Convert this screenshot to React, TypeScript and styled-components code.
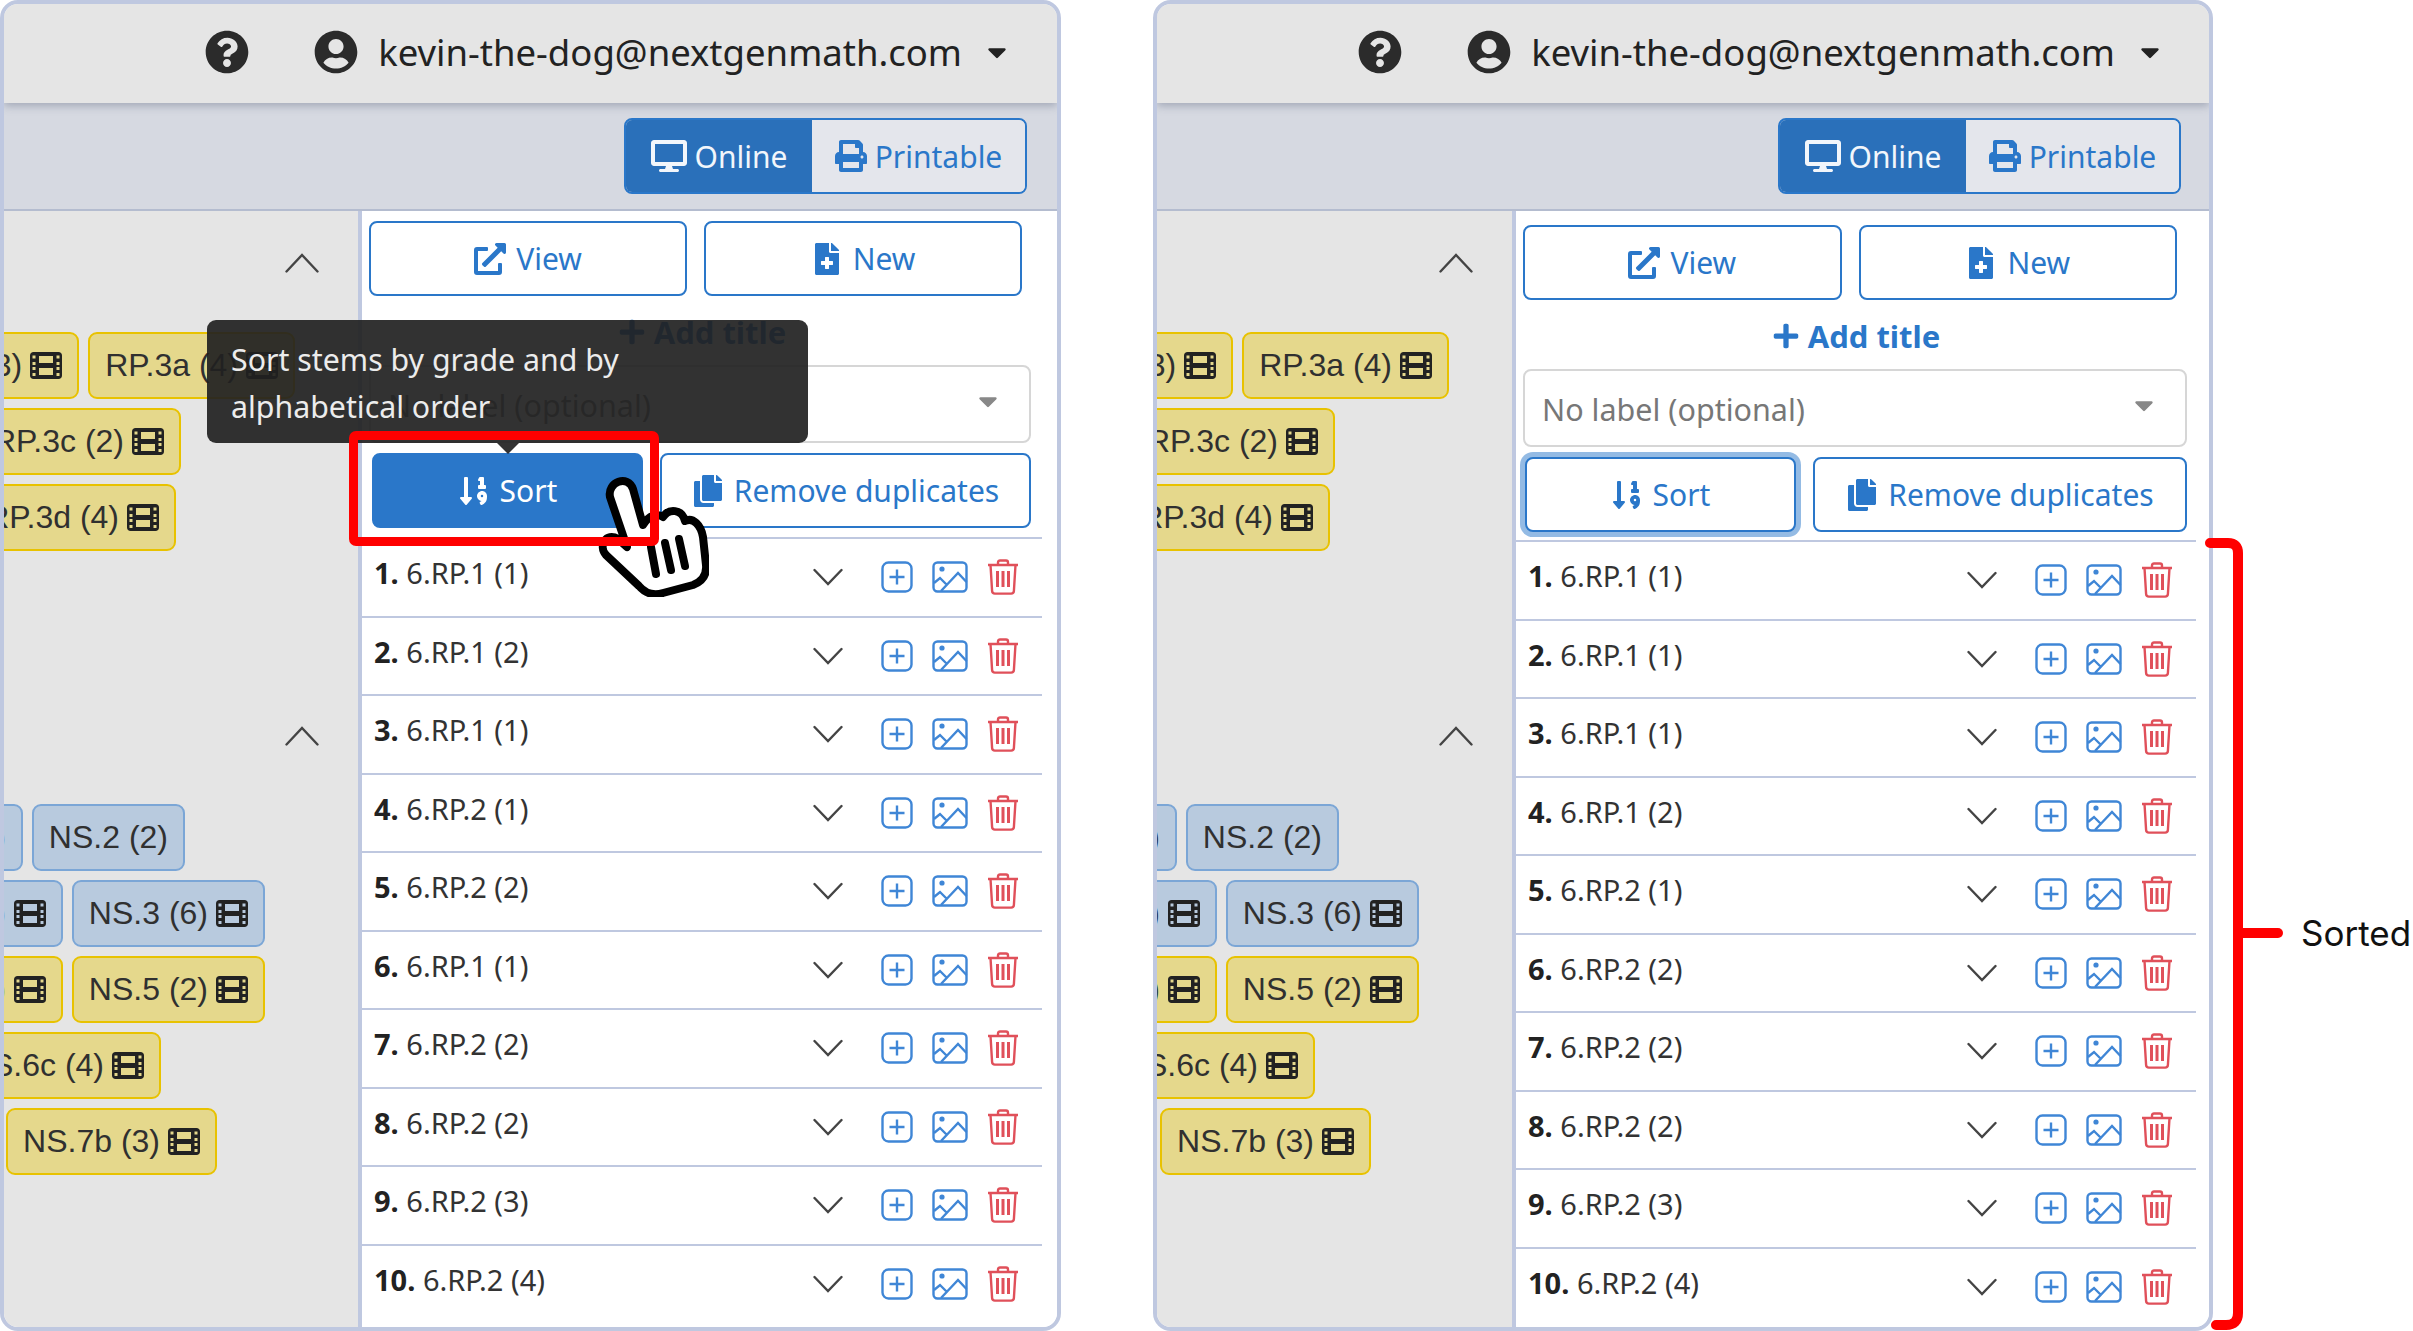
import React from 'react';
import styled, { createGlobalStyle } from 'styled-components';
import {
  FaCaretDown,
  FaCopy,
  FaDesktop,
  FaExternalLinkAlt,
  FaFileMedical,
  FaPlus,
  FaPrint,
  FaQuestionCircle,
  FaSortNumericDown,
  FaUserCircle,
} from 'react-icons/fa';

const Blue = '#2a77c9';
const Line = '#bfc8e0';

const GlobalStyle = createGlobalStyle`
  html, body {
    margin: 0;
    padding: 0;
    width: 2413px;
    height: 1331px;
    overflow: hidden;
    background: #fff;
    font-family: "Noto Sans", "Liberation Sans", sans-serif;
  }
`;

const Page = styled.div`
  position: relative;
  display: flex;
  gap: 92px;
  width: 2413px;
  height: 1331px;
  overflow: hidden;
`;

const Window = styled.div`
  position: relative;
  display: flex;
  flex-direction: column;
  flex-shrink: 0;
  box-sizing: border-box;
  width: ${(p) => (p.$sorted ? 1060 : 1061)}px;
  height: 1331px;
  border: 4px solid ${Line};
  border-radius: 18px;
  overflow: hidden;
`;

const Header = styled.header`
  position: relative;
  z-index: 1;
  display: flex;
  align-items: center;
  justify-content: flex-end;
  flex-shrink: 0;
  box-sizing: border-box;
  height: 99px;
  padding: 0 ${(p) => (p.$sorted ? 44 : 45)}px 3px 0;
  background: #e5e5e5;
  box-shadow: 0 3px 8px rgba(70, 80, 110, 0.35);
  color: #222;
`;

const HelpIcon = styled(FaQuestionCircle)`
  width: 44px;
  height: 44px;
  margin-right: 65px;
  color: #2b2b2b;
`;

const UserIcon = styled(FaUserCircle)`
  width: 44px;
  height: 44px;
  margin-right: 20px;
  color: #2b2b2b;
`;

const Email = styled.span`
  font-size: 36.5px;
  line-height: 44px;
  color: #222;
`;

const HeaderCaret = styled(FaCaretDown)`
  width: 30px;
  height: 30px;
  margin-left: 20px;
  color: #222;
`;

const Toolbar = styled.div`
  display: flex;
  align-items: center;
  justify-content: flex-end;
  flex-shrink: 0;
  box-sizing: border-box;
  height: 108px;
  padding: 0 ${(p) => (p.$sorted ? 28 : 30)}px 0 0;
  background: #d6d9e1;
  border-bottom: 2px solid #b4bccf;
`;

const ToggleGroup = styled.div`
  display: flex;
  height: 76px;
  border: 2px solid ${Blue};
  border-radius: 8px;
  box-sizing: border-box;
  overflow: hidden;
`;

const ToggleButton = styled.div`
  display: flex;
  align-items: center;
  justify-content: center;
  gap: 8px;
  box-sizing: border-box;
  width: ${(p) => p.$width}px;
  font-size: 30px;
  color: ${(p) => (p.$active ? '#f2f6fb' : Blue)};
  background: ${(p) => (p.$active ? '#2a70ba' : '#e4e6ec')};

  svg {
    width: ${(p) => (p.$active ? 36 : 32)}px;
    height: ${(p) => (p.$active ? 36 : 32)}px;
  }
`;

const Body = styled.div`
  display: flex;
  flex: 1;
  min-height: 0;
`;

const Sidebar = styled.aside`
  flex-shrink: 0;
  box-sizing: border-box;
  width: ${(p) => (p.$sorted ? 355 : 354)}px;
  padding-left: ${(p) => (p.$sorted ? 1 : 0)}px;
  background: #e5e5e5;
  overflow: hidden;
`;

const GroupHead = styled.div`
  display: flex;
  justify-content: flex-end;
  box-sizing: border-box;
  height: ${(p) => p.$height}px;
  padding-top: ${(p) => p.$top}px;
  padding-right: 39px;
  color: #444;
`;

const ChipRow = styled.div`
  display: flex;
  justify-content: flex-end;
  gap: 9px;
  width: ${(p) => p.$end - 4}px;
  height: 67px;
  margin-bottom: 9px;
`;

const Chip = styled.div`
  display: flex;
  align-items: center;
  flex-shrink: 0;
  gap: 8px;
  box-sizing: border-box;
  height: 100%;
  padding: 0 15px;
  border: 2px solid ${(p) => (p.$tone === 'blue' ? '#7ba6d6' : '#e8c200')};
  border-radius: 9px;
  background: ${(p) => (p.$tone === 'blue' ? '#b8cade' : '#e5d88c')};
  font-family: "Liberation Sans", Arial, sans-serif;
  font-size: 32px;
  color: #303030;
  white-space: nowrap;
`;

const Panel = styled.section`
  position: relative;
  flex: 1;
  min-width: 0;
  box-sizing: border-box;
  padding-top: ${(p) => (p.$sorted ? 14 : 10)}px;
  border-left: 4px solid ${Line};
  background: #fff;
`;

const ButtonRow = styled.div`
  display: flex;
  gap: 17px;
  box-sizing: border-box;
  width: ${(p) => p.$width}px;
  height: 75px;
  margin-left: 7px;
`;

const OutlineButton = styled.div`
  display: flex;
  align-items: center;
  justify-content: center;
  gap: 10px;
  flex: ${(p) => (p.$width ? `0 0 ${p.$width}px` : '1')};
  box-sizing: border-box;
  margin-left: ${(p) => (p.$inset ? p.$inset : 0)}px;
  border: 2px solid ${Blue};
  border-radius: 8px;
  font-size: 30px;
  color: ${(p) => (p.$solid ? '#fff' : Blue)};
  background: ${(p) => (p.$solid ? Blue : '#fff')};
  box-shadow: ${(p) => (p.$focus ? '0 0 0 5px rgba(42, 119, 201, 0.5)' : 'none')};

  svg {
    width: 32px;
    height: 32px;
  }
`;

const AddTitle = styled.div`
  display: flex;
  align-items: center;
  justify-content: center;
  gap: 8px;
  width: 680px;
  height: 69px;
  padding-top: 2px;
  box-sizing: border-box;
  font-size: 31px;
  font-weight: 700;
  color: ${Blue};

  svg {
    width: 28px;
    height: 28px;
  }
`;

const LabelSelect = styled.div`
  display: flex;
  align-items: center;
  justify-content: space-between;
  box-sizing: border-box;
  width: ${(p) => p.$width}px;
  height: 78px;
  margin: 0 0 10px 7px;
  padding: 2px 26px 0 17px;
  border: 2px solid #d6d6d6;
  border-radius: 8px;
  font-size: 30.5px;
  color: #777;

  svg {
    width: 30px;
    height: 30px;
    margin-bottom: 8px;
    color: #888;
  }
`;

const Stems = styled.div`
  width: 680px;
  margin-top: ${(p) => (p.$sorted ? 8 : 9)}px;
`;

const StemRow = styled.div`
  display: flex;
  align-items: center;
  box-sizing: border-box;
  height: 78.5px;
  padding: 0 23px 0 12px;
  border-top: 2.5px solid ${Line};
`;

const StemName = styled.div`
  flex: 1;
  margin-top: -9px;
  font-size: 29px;
  color: #333;

  b {
    font-weight: 700;
    color: #222;
  }
`;

const IconCell = styled.div`
  display: flex;
  justify-content: center;
  width: ${(p) => p.$width}px;
  margin-left: ${(p) => p.$gap}px;
`;

const Tooltip = styled.div`
  position: absolute;
  left: 203px;
  top: 316px;
  z-index: 3;
  box-sizing: border-box;
  width: 601px;
  height: 123px;
  padding: 16px 24px;
  border-radius: 9px;
  background: rgba(33, 33, 33, 0.92);
  color: #ececec;
  font-size: 30.3px;
  line-height: 47px;

  &::after {
    content: '';
    position: absolute;
    left: 290px;
    bottom: -11px;
    border-left: 11px solid transparent;
    border-right: 11px solid transparent;
    border-top: 11px solid rgba(33, 33, 33, 0.92);
  }
`;

const Highlight = styled.div`
  position: absolute;
  left: 345px;
  top: 427px;
  z-index: 5;
  box-sizing: border-box;
  width: 310px;
  height: 115px;
  border: 9px solid #f00;
  border-radius: 7px;
`;

const HandCursor = styled.svg`
  position: absolute;
  left: 593px;
  top: 471px;
  z-index: 4;
  width: 112px;
  height: 122px;
`;

const Bracket = styled.svg`
  position: absolute;
  left: 2200px;
  top: 535px;
  width: 90px;
  height: 796px;
`;

const SortedLabel = styled.span`
  position: absolute;
  left: 2301px;
  top: 912px;
  font-family: Inter, "Liberation Sans", sans-serif;
  font-size: 35px;
  line-height: 42px;
  color: #111;
`;

const FilmIcon = () => (
  <svg width="32" height="27" viewBox="0 0 32 27">
    <path
      fill="#222"
      fillRule="evenodd"
      d="M3.500 0h25C30.500 0 32 1.500 32 3.500v20c0 2-1.500 3.500-3.500 3.500h-25C1.500 27 0 25.500 0 23.500v-20C0 1.500 1.500 0 3.500 0zM2.500 3.500v3h3v-3zM2.500 10v3h3v-3zM2.500 15v3h3v-3zM2.500 21v3h3v-3zM26.500 3.500v3h3v-3zM26.500 10v3h3v-3zM26.500 15v3h3v-3zM26.500 21v3h3v-3zM9 4v7h14V4zM9 16v7h14v-7z"
    />
  </svg>
);

const ChevronDown = () => (
  <svg width="30" height="18" viewBox="0 0 30 18" fill="none" stroke="#444" strokeWidth="2.4" strokeLinecap="round">
    <polyline points="1.5,2 15,16 28.5,2" />
  </svg>
);

const ChevronUp = () => (
  <svg width="34" height="20" viewBox="0 0 34 20" fill="none" stroke="#444" strokeWidth="2.4" strokeLinecap="round">
    <polyline points="1.5,18.5 17,2 32.5,18.5" />
  </svg>
);

const PlusBox = () => (
  <svg width="32" height="32" viewBox="0 0 32 32" fill="none" stroke="#3f86d6" strokeWidth="2.4">
    <rect x="1.5" y="1.5" width="29" height="29" rx="6" />
    <path d="M16 8.5v15M8.5 16h15" />
  </svg>
);

const ImageBox = () => (
  <svg width="36" height="32" viewBox="0 0 36 32" fill="none" stroke="#3f86d6" strokeWidth="2.4">
    <rect x="1.5" y="1.5" width="33" height="29" rx="4" />
    <circle cx="10" cy="8" r="2.6" fill="#3f86d6" stroke="none" />
    <path d="M2 22l6-5 6 6M9 30L26 12l8.5 9" />
  </svg>
);

const TrashCan = () => (
  <svg width="32" height="36" viewBox="0 0 32 36" fill="none" stroke="#e0505a" strokeWidth="2.4">
    <path d="M1 6h30M11 6V3.500C11 2 12 1.500 13 1.500h6c1 0 2 .5 2 2V6" />
    <path d="M3.500 6l1.600 26c.1 1.600 1.200 2.600 2.800 2.600h16.200c1.600 0 2.700-1 2.800-2.600L28.500 6" />
    <path d="M10.500 12v16M16 12v16M21.500 12v16" strokeWidth="3" />
  </svg>
);

const Hand = () => (
  <HandCursor viewBox="0 0 112 122" fill="#fff" stroke="#000" strokeWidth="8" strokeLinejoin="round" strokeLinecap="round">
    <path d="M13 22C10 7 31 -1 36 14L46 50C52 40 60 38 66 42C72 33 85 34 88 46C96 42 104 50 106 62L109 90C110 101 104 107 96 110L66 118C56 121 48 118 42 111L9 80C1 71 9 57 21 64L30 72Z" />
    <path d="M54 72l5 27M68 68l6 27M82 64l6 27" fill="none" />
  </HandCursor>
);

const upperChips = [
  { end: 295, chips: [{ name: 'RP.2 (3)', film: true }, { name: 'RP.3a (4)', film: true }] },
  { end: 181, chips: [{ name: 'RP.3c (2)', film: true }] },
  { end: 176, chips: [{ name: 'RP.3d (4)', film: true }] },
];

const lowerChips = [
  { end: 185, chips: [{ name: 'NS.1 (4)', tone: 'blue' }, { name: 'NS.2 (2)', tone: 'blue' }] },
  { end: 265, chips: [{ name: 'NS.1b (4)', tone: 'blue', film: true }, { name: 'NS.3 (6)', tone: 'blue', film: true }] },
  { end: 265, chips: [{ name: 'NS.4 (5)', film: true }, { name: 'NS.5 (2)', film: true }] },
  { end: 161, chips: [{ name: 'NS.6c (4)', film: true }] },
  { end: 217, chips: [{ name: 'NS.7b (3)', film: true }] },
];

const shuffled = ['6.RP.1 (1)', '6.RP.1 (2)', '6.RP.1 (1)', '6.RP.2 (1)', '6.RP.2 (2)', '6.RP.1 (1)', '6.RP.2 (2)', '6.RP.2 (2)', '6.RP.2 (3)', '6.RP.2 (4)'];
const sorted = ['6.RP.1 (1)', '6.RP.1 (1)', '6.RP.1 (1)', '6.RP.1 (2)', '6.RP.2 (1)', '6.RP.2 (2)', '6.RP.2 (2)', '6.RP.2 (2)', '6.RP.2 (3)', '6.RP.2 (4)'];

const renderChips = (rows) =>
  rows.map((row, i) => (
    <ChipRow key={i} $end={row.end}>
      {row.chips.map((chip) => (
        <Chip key={chip.name} $tone={chip.tone}>
          {chip.name}
          {chip.film && <FilmIcon />}
        </Chip>
      ))}
    </ChipRow>
  ));

const EditorWindow = ({ isSorted, stems }) => (
  <Window $sorted={isSorted}>
    <Header $sorted={isSorted}>
      <HelpIcon />
      <UserIcon />
      <Email>kevin-the-dog@nextgenmath.com</Email>
      <HeaderCaret />
    </Header>
    <Toolbar $sorted={isSorted}>
      <ToggleGroup>
        <ToggleButton $active $width={186}>
          <FaDesktop />
          Online
        </ToggleButton>
        <ToggleButton $width={213}>
          <FaPrint />
          Printable
        </ToggleButton>
      </ToggleGroup>
    </Toolbar>
    <Body>
      <Sidebar $sorted={isSorted}>
        <GroupHead $height={121} $top={42}>
          <ChevronUp />
        </GroupHead>
        {renderChips(upperChips)}
        <GroupHead $height={244} $top={166}>
          <ChevronUp />
        </GroupHead>
        {renderChips(lowerChips)}
      </Sidebar>
      <Panel $sorted={isSorted}>
        <ButtonRow $width={isSorted ? 654 : 653}>
          <OutlineButton>
            <FaExternalLinkAlt />
            View
          </OutlineButton>
          <OutlineButton>
            <FaFileMedical />
            New
          </OutlineButton>
        </ButtonRow>
        <AddTitle>
          <FaPlus />
          Add title
        </AddTitle>
        <LabelSelect $width={isSorted ? 664 : 662}>
          No label (optional)
          <FaCaretDown />
        </LabelSelect>
        <ButtonRow $width={isSorted ? 664 : 662}>
          <OutlineButton $width={271} $inset={isSorted ? 2 : 3} $solid={!isSorted} $focus={isSorted}>
            <FaSortNumericDown />
            Sort
          </OutlineButton>
          <OutlineButton>
            <FaCopy />
            Remove duplicates
          </OutlineButton>
        </ButtonRow>
        <Stems $sorted={isSorted}>
          {stems.map((stem, i) => (
            <StemRow key={i}>
              <StemName>
                <b>{i + 1}.</b> {stem}
              </StemName>
              <IconCell $width={36} $gap={0}>
                <ChevronDown />
              </IconCell>
              <IconCell $width={32} $gap={35}>
                <PlusBox />
              </IconCell>
              <IconCell $width={36} $gap={19}>
                <ImageBox />
              </IconCell>
              <IconCell $width={32} $gap={19}>
                <TrashCan />
              </IconCell>
            </StemRow>
          ))}
        </Stems>
      </Panel>
    </Body>
    {!isSorted && (
      <>
        <Tooltip>
          Sort stems by grade and by
          <br />
          alphabetical order
        </Tooltip>
        <Hand />
        <Highlight />
      </>
    )}
  </Window>
);

export default function App() {
  return (
    <Page>
      <GlobalStyle />
      <EditorWindow isSorted={false} stems={shuffled} />
      <EditorWindow isSorted stems={sorted} />
      <Bracket viewBox="0 0 90 796" fill="none" stroke="#f00" strokeWidth="10" strokeLinecap="round">
        <path d="M10 8H28Q38 8 38 18V778Q38 790 26 790H16" />
        <path d="M40 398H78" />
      </Bracket>
      <SortedLabel>Sorted</SortedLabel>
    </Page>
  );
}
